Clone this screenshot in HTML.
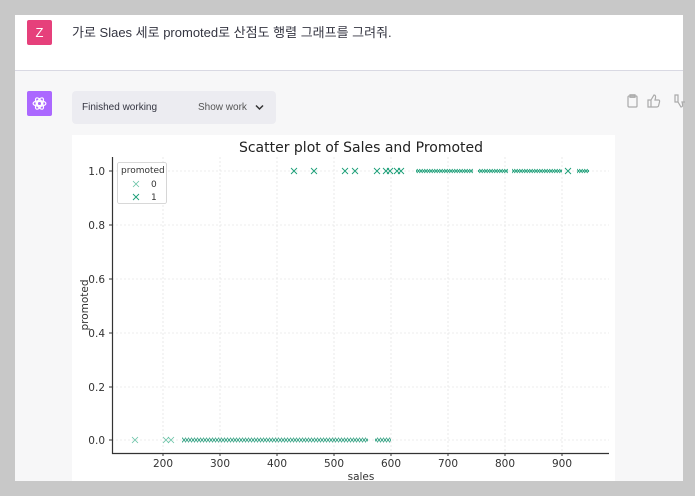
<!DOCTYPE html>
<html><head><meta charset="utf-8"><style>
body{margin:0;width:695px;height:496px;background:#c8c8c8;position:relative;overflow:hidden;font-family:"Liberation Sans","Noto Sans CJK KR",sans-serif}
.top{position:absolute;left:15px;top:15px;width:668px;height:55px;background:#fff;border-bottom:1px solid #d9d9e3}
.bot{position:absolute;left:15px;top:71px;width:668px;height:410px;background:#f7f7f8}
.av{position:absolute;width:25px;height:25px;border-radius:2px;color:#fff;font-size:13px;text-align:center;line-height:25px}
.box{position:absolute;left:72px;top:91px;width:204px;height:33px;background:#ececf1;border-radius:4px;font-size:10px;color:#343541}
</style></head><body>
<div class="top"></div>
<div class="bot"></div>
<div class="av" style="left:27px;top:20px;background:#e6407b">Z</div>
<div style="position:absolute;left:72px;top:22px;font-size:13px;color:#343541">가로 Slaes 세로 promoted로 산점도 행렬 그래프를 그려줘.</div>
<div class="av" style="left:27px;top:91px;background:#ab68ff"><svg width="17" height="17" viewBox="0 0 24 24" style="margin-top:4px" fill="none" stroke="#fff" stroke-width="1.6"><circle cx="12" cy="12" r="3"/><ellipse cx="12" cy="12" rx="9" ry="4"/><ellipse cx="12" cy="12" rx="9" ry="4" transform="rotate(60 12 12)"/><ellipse cx="12" cy="12" rx="9" ry="4" transform="rotate(120 12 12)"/></svg></div>
<div class="box"><span style="position:absolute;left:10px;top:11px">Finished working</span><span style="position:absolute;left:126px;top:11px;color:#555">Show work</span><svg style="position:absolute;left:183px;top:13px" width="9" height="7" viewBox="0 0 9 7"><path d="M1 1.5l3.5 3.5 3.5-3.5" stroke="#333" stroke-width="1.5" fill="none"/></svg></div>
<svg style="position:absolute;left:626px;top:94px" width="60" height="14" fill="none" stroke="#aaa" stroke-width="1.2"><rect x="2" y="2" width="9" height="11" rx="1"/><rect x="4" y="0.8" width="5" height="2.5"/><path d="M25 6v7h-3V6zM25 6l3-5q2 0 1.5 3l-.5 2h3.5q1.5 0 1 2l-1 4q-.5 1-2 1H25"/><path d="M52 8V1h-3v7zM52 8l3 5q2 0 1.5-3l-.5-2h3"/></svg>
<div style="position:absolute;left:72px;top:135px;width:543px;height:361px;background:#fff"></div>
<svg style="position:absolute;left:0;top:0" width="695" height="496" font-family="DejaVu Sans,sans-serif">
<defs>
<pattern id="p0" width="3" height="7" patternUnits="userSpaceOnUse" x="0" y="436.5"><path d="M-2 0l6 7M4 0l-6 7" stroke="#2e9f80" stroke-width="0.9"/></pattern>
<pattern id="p1" width="2.5" height="7" patternUnits="userSpaceOnUse" x="0" y="167.5"><path d="M-2 0l6 7M4 0l-6 7" stroke="#1b9e77" stroke-width="0.9"/></pattern>
<symbol id="x0" overflow="visible"><path d="M-3-3l6 6M3-3l-6 6" stroke="#66c2a5" stroke-width="0.8"/></symbol>
<symbol id="x1" overflow="visible"><path d="M-3-3l6 6M3-3l-6 6" stroke="#1b9e77" stroke-width="0.9"/></symbol>
</defs>
<g stroke="#ddd" stroke-width="0.6" stroke-dasharray="2,2">
<path d="M163 157V453M220 157V453M277 157V453M334 157V453M391 157V453M448 157V453M505 157V453M562 157V453"/>
<path d="M112 171H609M112 225H609M112 279H609M112 333H609M112 387H609M112 440H609"/>
</g>
<path d="M112.5 157V453.5H609" stroke="#333" stroke-width="1.2" fill="none"/>
<g stroke="#333" stroke-width="1"><path d="M109 171h3M109 225h3M109 279h3M109 333h3M109 387h3M109 440h3M163 453v3M220 453v3M277 453v3M334 453v3M391 453v3M448 453v3M505 453v3M562 453v3"/></g>
<g font-size="10.5" fill="#333" text-anchor="end"><text x="105" y="175">1.0</text><text x="105" y="229">0.8</text><text x="105" y="283">0.6</text><text x="105" y="337">0.4</text><text x="105" y="391">0.2</text><text x="105" y="444">0.0</text></g>
<g font-size="10.5" fill="#333" text-anchor="middle"><text x="163" y="467">200</text><text x="220" y="467">300</text><text x="277" y="467">400</text><text x="334" y="467">500</text><text x="391" y="467">600</text><text x="448" y="467">700</text><text x="505" y="467">800</text><text x="562" y="467">900</text><text x="361" y="480">sales</text></g>
<text x="88" y="305" font-size="10.5" fill="#333" text-anchor="middle" transform="rotate(-90 88 305)">promoted</text>
<text x="361" y="152" font-size="14" fill="#222" text-anchor="middle">Scatter plot of Sales and Promoted</text>
<rect x="182" y="436.5" width="183" height="7" fill="url(#p0)"/>
<rect x="365" y="436.5" width="3" height="7" fill="url(#p0)"/>
<rect x="375" y="436.5" width="16" height="7" fill="url(#p0)"/>
<use href="#x0" x="135" y="440"/><use href="#x0" x="166" y="440"/><use href="#x0" x="171" y="440"/>
<rect x="416" y="167.5" width="57" height="7" fill="url(#p1)"/>
<rect x="478" y="167.5" width="30" height="7" fill="url(#p1)"/>
<rect x="512" y="167.5" width="50" height="7" fill="url(#p1)"/>
<rect x="577" y="167.5" width="12" height="7" fill="url(#p1)"/>
<use href="#x1" x="294" y="171"/><use href="#x1" x="314" y="171"/><use href="#x1" x="345" y="171"/><use href="#x1" x="355" y="171"/><use href="#x1" x="377" y="171"/><use href="#x1" x="386" y="171"/><use href="#x1" x="390" y="171"/><use href="#x1" x="397" y="171"/><use href="#x1" x="401" y="171"/><use href="#x1" x="568" y="171"/>
<rect x="117.5" y="162.5" width="49" height="41" rx="2" fill="#fff" stroke="#ccc" stroke-width="0.8"/>
<text x="121" y="173" font-size="9" fill="#333">promoted</text>
<use href="#x0" x="136" y="184"/><text x="151" y="187" font-size="9" fill="#333">0</text>
<use href="#x1" x="136" y="197"/><text x="151" y="200" font-size="9" fill="#333">1</text>
</svg>
<div style="position:absolute;left:0;top:481px;width:695px;height:15px;background:#c8c8c8"></div>
</body></html>
